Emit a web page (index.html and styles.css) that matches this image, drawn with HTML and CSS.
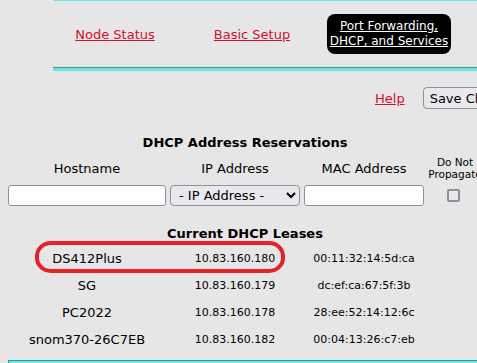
FILE: index.html
```html
<!DOCTYPE html>
<html lang="en">
<head>
    <meta charset="UTF-8">
    <title>DHCP</title>
    <link rel="stylesheet" href="styles.css">
</head>
<body>
    <nav class="tabs">
        <div class="tab"><a href="#">Node Status</a></div>
        <div class="tab"><a href="#">Basic Setup</a></div>
        <div class="tab"><div class="tab-current"><a href="#">Port Forwarding,<br>DHCP, and Services</a></div></div>
    </nav>

    <div class="actions">
        <a class="help" href="#">Help</a>
        <button class="save">Save Changes</button>
    </div>

    <table class="dhcp">
        <colgroup>
            <col class="col-host">
            <col class="col-ip">
            <col class="col-mac">
            <col class="col-prop">
        </colgroup>
        <tr>
            <th class="title" colspan="4">DHCP Address Reservations</th>
        </tr>
        <tr class="heads">
            <td>Hostname</td>
            <td>IP Address</td>
            <td>MAC Address</td>
            <td class="small">Do Not<br>Propagate</td>
        </tr>
        <tr class="inputs">
            <td><input type="text" class="field"></td>
            <td><select class="ip-select"><option>- IP Address -</option></select></td>
            <td><input type="text" class="field"></td>
            <td><input type="checkbox" class="check"></td>
        </tr>
        <tr>
            <th class="title leases" colspan="4">Current DHCP Leases</th>
        </tr>
        <tr class="lease">
            <td>DS412Plus</td>
            <td class="num">10.83.160.180</td>
            <td class="num">00:11:32:14:5d:ca</td>
            <td></td>
        </tr>
        <tr class="lease">
            <td>SG</td>
            <td class="num">10.83.160.179</td>
            <td class="num">dc:ef:ca:67:5f:3b</td>
            <td></td>
        </tr>
        <tr class="lease">
            <td>PC2022</td>
            <td class="num">10.83.160.178</td>
            <td class="num">28:ee:52:14:12:6c</td>
            <td></td>
        </tr>
        <tr class="lease">
            <td>snom370-26C7EB</td>
            <td class="num">10.83.160.182</td>
            <td class="num">00:04:13:26:c7:eb</td>
            <td></td>
        </tr>
    </table>

    <div class="footer-bar"></div>

    <!-- annotation drawn over the first lease -->
    <div class="highlight"></div>
</body>
</html>
```

FILE: styles.css
```css
html, body {
    overflow: hidden;
}

body {
    font-family: 'DejaVu Sans', Verdana, sans-serif;
    font-size: 13px;
    color: #000000;
    background-color: #e6e6e6;
    margin: 0;
    padding: 0 8px;
    position: relative;
    width: 540px;
}

a {
    color: #d20f2b;
}

.tabs {
    margin-left: 45px;
    width: 520px;
    height: 66px;
    border-top: 1px solid #6de6e6;
    border-bottom: 1px solid #3f9494;
    box-shadow: 0 3px 0 #6de6e6;
    display: grid;
    grid-template-columns: 124px 150px 124px;
    align-items: center;
}

.tab {
    display: flex;
    justify-content: center;
    white-space: nowrap;
}

.tab-current {
    background-color: #000000;
    border-radius: 8px;
    width: 134px;
    height: 40px;
    box-sizing: border-box;
    padding: 5px 0;
    font-size: 12px;
    line-height: 15px;
    text-align: center;
}

.tab-current a {
    color: #ffffff;
}

.actions {
    display: flex;
    align-items: center;
    margin-top: 19px;
    padding-left: 367px;
    gap: 18px;
    height: 22px;
}

.save {
    font-family: 'DejaVu Sans', Verdana, sans-serif;
    font-size: 13px;
    height: 22px;
    padding: 0 6px;
    border: 1px solid #8f8f9d;
    border-radius: 4px;
    background-color: #e9e9ed;
    color: #000000;
    white-space: nowrap;
}

.dhcp {
    margin-top: 23px;
    border-collapse: collapse;
    table-layout: fixed;
    width: 474px;
}

.col-host { width: 162px; }
.col-ip { width: 134px; }
.col-mac { width: 124px; }
.col-prop { width: 54px; }

.dhcp td {
    padding: 0 4px 0 0;
    text-align: center;
    white-space: nowrap;
}

.dhcp td:last-child {
    padding-right: 0;
}

.title {
    font-weight: bold;
    height: 22px;
    padding: 0;
    line-height: 22px;
}

.title.leases {
    padding-top: 14px;
}

.heads td {
    height: 28px;
}

.small {
    font-size: 10.5px;
    line-height: 12px;
}

.inputs td {
    height: 27px;
}

.field {
    display: block;
    box-sizing: border-box;
    height: 21px;
    width: 100%;
    margin: 0;
    border: 1px solid #8f8f9d;
    border-radius: 3px;
    background-color: #ffffff;
}

.ip-select {
    display: block;
    box-sizing: border-box;
    width: 100%;
    height: 21px;
    margin: 0;
    padding: 0 4px;
    font-family: 'DejaVu Sans', Verdana, sans-serif;
    font-size: 13px;
    color: #000000;
    border: 1px solid #8f8f9d;
    border-radius: 4px;
    background-color: #e9e9ed;
}

.check {
    appearance: none;
    display: block;
    margin: 0 0 0 19px;
    width: 13px;
    height: 13px;
    box-sizing: border-box;
    border: 2px solid #8f8f9d;
    border-radius: 2px;
    background-color: #e9e9ed;
}

.lease td {
    height: 27px;
}

.num {
    font-size: 11px;
}

.footer-bar {
    margin-top: 7px;
    width: 520px;
    height: 6px;
    background-color: #6de6e6;
    border-top: 1px solid #3f9494;
    border-left: 1px solid #3f9494;
}

.highlight {
    position: absolute;
    left: 35px;
    top: 241px;
    width: 250px;
    height: 32px;
    box-sizing: border-box;
    border: 4px solid #e8202a;
    border-radius: 16px / 15px;
}
```
